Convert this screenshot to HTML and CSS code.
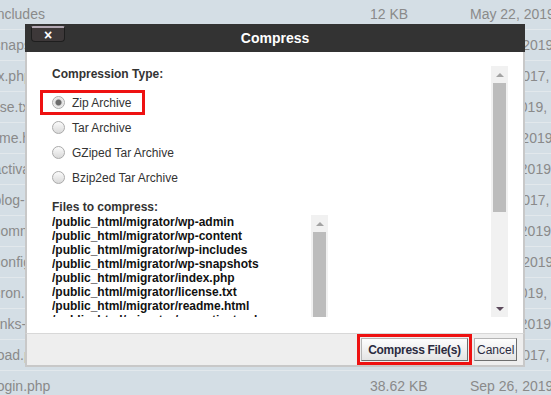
FILE: index.html
```html
<!DOCTYPE html>
<html lang="en">
<head>
    <meta charset="UTF-8">
    <meta name="viewport" content="width=device-width, initial-scale=1.0">
    <title>File Manager - Compress</title>
    <link rel="stylesheet" href="styles.css">
</head>
<body>
    <!-- File listing behind the dialog -->
    <div class="file-table">
        <div class="file-row"><span class="col-name">wp-includes</span><span class="col-size">12 KB</span><span class="col-date">May 22, 2019, 10:14 AM</span></div>
        <div class="file-row"><span class="col-name">wp-snapshots</span><span class="col-size">4 KB</span><span class="col-date">Sep 26, 2019, 2:41 PM</span></div>
        <div class="file-row"><span class="col-name">index.php</span><span class="col-size">418 bytes</span><span class="col-date">Sep 8, 2017, 3:02 AM</span></div>
        <div class="file-row"><span class="col-name">license.txt</span><span class="col-size">19.45 KB</span><span class="col-date">Jan 8, 2019, 11:20 AM</span></div>
        <div class="file-row"><span class="col-name">readme.html</span><span class="col-size">7.25 KB</span><span class="col-date">Mar 13, 2019, 6:50 PM</span></div>
        <div class="file-row"><span class="col-name">wp-activate.php</span><span class="col-size">6.72 KB</span><span class="col-date">Jan 16, 2019, 5:31 AM</span></div>
        <div class="file-row"><span class="col-name">wp-blog-header.php</span><span class="col-size">369 bytes</span><span class="col-date">Dec 1, 2017, 4:11 PM</span></div>
        <div class="file-row"><span class="col-name">wp-comments-post.php</span><span class="col-size">2.23 KB</span><span class="col-date">Jan 10, 2019, 9:57 AM</span></div>
        <div class="file-row"><span class="col-name">wp-config.php</span><span class="col-size">3.11 KB</span><span class="col-date">Sep 26, 2019, 2:41 PM</span></div>
        <div class="file-row"><span class="col-name">wp-cron.php</span><span class="col-size">3.76 KB</span><span class="col-date">Jan 9, 2019, 8:25 AM</span></div>
        <div class="file-row"><span class="col-name">wp-links-opml.php</span><span class="col-size">2.37 KB</span><span class="col-date">Jan 16, 2019, 5:31 AM</span></div>
        <div class="file-row"><span class="col-name">wp-load.php</span><span class="col-size">3.22 KB</span><span class="col-date">Aug 9, 2017, 6:02 PM</span></div>
        <div class="file-row"><span class="col-name">wp-login.php</span><span class="col-size">38.62 KB</span><span class="col-date">Sep 26, 2019, 2:41 PM</span></div>
    </div>

    <!-- Compress dialog -->
    <div class="dialog">
        <div class="dialog-title">
            <button class="close-btn">&times;</button>
            <span class="title-text">Compress</span>
        </div>
        <div class="dialog-body">
            <div class="scroll-area">
                <div class="scroll-content">
                    <div class="section-label">Compression Type:</div>
                    <div class="options">
                        <label class="option selected"><span class="radio checked"></span>Zip Archive</label>
                        <label class="option"><span class="radio"></span>Tar Archive</label>
                        <label class="option"><span class="radio"></span>GZiped Tar Archive</label>
                        <label class="option"><span class="radio"></span>Bzip2ed Tar Archive</label>
                    </div>
                    <div class="section-label files-label">Files to compress:</div>
                    <div class="file-list">
                        <div class="file-lines">
                            <div>/public_html/migrator/wp-admin</div>
                            <div>/public_html/migrator/wp-content</div>
                            <div>/public_html/migrator/wp-includes</div>
                            <div>/public_html/migrator/wp-snapshots</div>
                            <div>/public_html/migrator/index.php</div>
                            <div>/public_html/migrator/license.txt</div>
                            <div>/public_html/migrator/readme.html</div>
                            <div>/public_html/migrator/wp-activate.php</div>
                            <div>/public_html/migrator/wp-blog-header.php</div>
                        </div>
                        <div class="scrollbar">
                            <div class="arrow arrow-up"></div>
                            <div class="thumb list-thumb"></div>
                        </div>
                    </div>
                </div>
                <div class="scrollbar">
                    <div class="arrow arrow-up"></div>
                    <div class="thumb body-thumb"></div>
                    <div class="track"></div>
                    <div class="arrow arrow-down"></div>
                </div>
            </div>
        </div>
        <div class="dialog-footer">
            <span class="highlight"><button class="btn btn-primary">Compress File(s)</button></span>
            <button class="btn btn-cancel">Cancel</button>
        </div>
    </div>
</body>
</html>
```

FILE: styles.css
```css
* {
    margin: 0;
    padding: 0;
    box-sizing: border-box;
    font-family: 'Liberation Sans', Arial, sans-serif;
}
html, body {
    width: 551px;
    height: 395px;
    overflow: hidden;
}
body {
    position: relative;
    background: #d4dee5;
}
.file-table {
    margin-top: -1px;
    margin-left: -29px;
}
.file-row {
    display: flex;
    height: 31px;
    border-bottom: 1px solid #e2e8ec;
    line-height: 30px;
    font-size: 14px;
    color: #8a8a8a;
    white-space: nowrap;
}
.col-name {
    width: 399px;
    flex-shrink: 0;
}
.col-size {
    width: 100px;
    flex-shrink: 0;
}
.col-date {
    flex-shrink: 0;
}
/* Dialog */
.dialog {
    position: absolute;
    left: 25px;
    top: 24px;
    width: 500px;
}
.dialog-title {
    height: 28px;
    background: #333333;
    display: grid;
    grid-template-columns: 1fr auto 1fr;
    align-items: center;
}
.close-btn {
    justify-self: start;
    margin-left: 6px;
    margin-top: -8px;
    width: 34px;
    height: 16px;
    border: 1px solid #1e1e1e;
    border-top: 2px solid #b3a8b3;
    border-radius: 2px 2px 4px 4px;
    background: #3d3839;
    color: #ffffff;
    font-size: 14px;
    font-weight: bold;
    line-height: 12px;
    cursor: pointer;
}
.title-text {
    grid-column: 2;
    color: #ffffff;
    font-size: 14px;
    font-weight: bold;
}
.dialog-body {
    background: #ffffff;
    border-left: 2px solid #c8c8c8;
    border-right: 2px solid #c8c8c8;
    padding: 14px 15px 16px 13px;
}
.scroll-area {
    display: flex;
    height: 251px;
}
.scroll-content {
    flex: 1;
    overflow: hidden;
    padding: 1px 0 0 12px;
}
.section-label {
    font-size: 12px;
    font-weight: bold;
    color: #333333;
    line-height: 14px;
}
.options {
    margin: 9px 0 0 -12px;
}
.option {
    display: flex;
    align-items: center;
    gap: 7px;
    width: fit-content;
    height: 25px;
    padding: 0 11px 0 9px;
    border: 3px solid transparent;
    font-size: 12px;
    color: #333333;
}
.option.selected {
    border-color: #ee1111;
}
.radio {
    width: 13px;
    height: 13px;
    border-radius: 50%;
    border: 1px solid #aaaaaa;
    background: linear-gradient(#fbfbfb, #d9d9d9);
}
.radio.checked {
    background: radial-gradient(circle, #6b6b6b 0, #6b6b6b 2.5px, #dedede 3.5px, #f4f4f4 6px);
}
.files-label {
    margin-top: 10px;
}
.file-list {
    display: flex;
    width: 276px;
    height: 140px;
    margin-top: 1px;
}
.file-lines {
    flex: 1;
    font-size: 12px;
    font-weight: bold;
    line-height: 14px;
    color: #111111;
    white-space: nowrap;
    overflow: hidden;
}
/* Scrollbars */
.scrollbar {
    width: 17px;
    flex-shrink: 0;
    background: #f1f1f1;
    display: flex;
    flex-direction: column;
    align-items: center;
}
.arrow {
    height: 17px;
    width: 100%;
    display: flex;
    justify-content: center;
    align-items: center;
}
.arrow-up::before {
    content: '';
    border-left: 4px solid transparent;
    border-right: 4px solid transparent;
    border-bottom: 4px solid #a3a3a3;
}
.arrow-down::before {
    content: '';
    border-left: 4px solid transparent;
    border-right: 4px solid transparent;
    border-top: 4px solid #5c4a5c;
}
.thumb {
    width: 13px;
    background: #bcbcbc;
}
.list-thumb {
    flex: 1;
}
.body-thumb {
    height: 129px;
}
.track {
    flex: 1;
}
/* Footer */
.dialog-footer {
    display: flex;
    justify-content: flex-end;
    align-items: center;
    gap: 2px;
    height: 34px;
    padding-right: 6px;
    background: #eeeeee;
    border-top: 1px solid #d8d8d8;
    border-left: 2px solid #c8c8c8;
    border-right: 2px solid #c8c8c8;
    border-bottom: 2px solid #c8c8c8;
}
.highlight {
    display: flex;
    padding: 1px;
    border: 3px solid #ee1111;
}
.btn {
    height: 23px;
    border: 1px solid #b5b5b5;
    border-right-color: #6e6e6e;
    border-bottom-color: #6e6e6e;
    background: linear-gradient(#fdfdfd, #e4e4e4);
    color: #2b2b3f;
    font-size: 12px;
    cursor: pointer;
}
.btn-primary {
    width: 107px;
    padding: 0 1px;
    font-weight: bold;
    letter-spacing: -0.3px;
}
.btn-cancel {
    width: 43px;
    padding: 0 2px;
}
```
